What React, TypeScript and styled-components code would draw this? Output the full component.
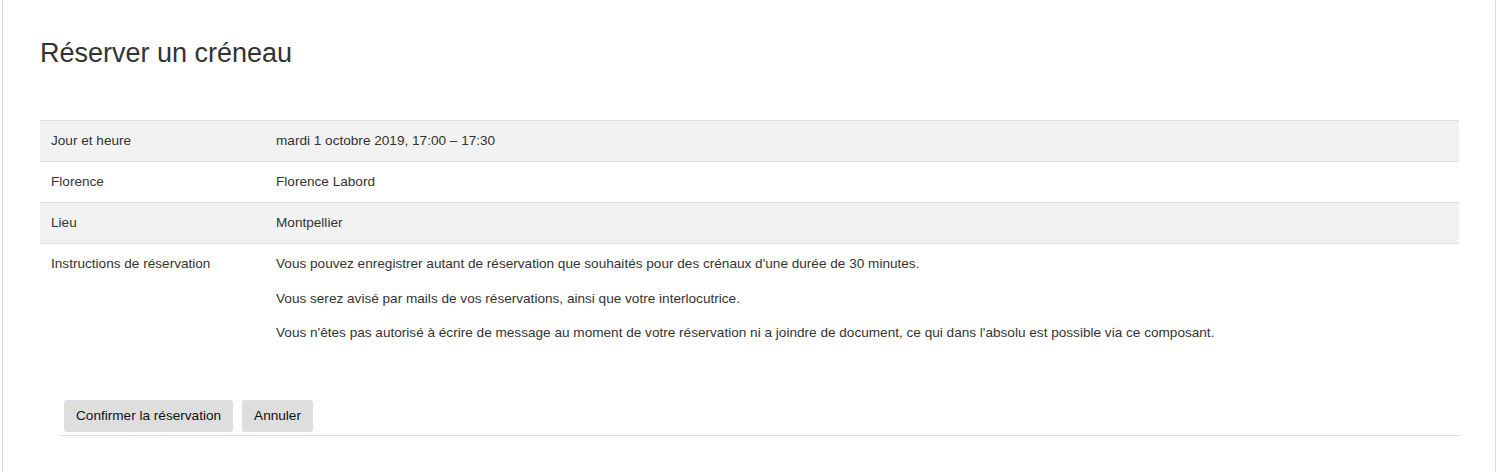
import React from 'react';
import styled, { createGlobalStyle } from 'styled-components';

const GlobalStyle = createGlobalStyle`
  body {
    margin: 0;
    background: #fff;
    font-family: "Liberation Sans", Arial, sans-serif;
    color: #333;
  }
`;

const Card = styled.div`
  margin-left: 2px;
  width: 1494px;
  min-height: 472px;
  box-sizing: border-box;
  border-left: 1px solid #dcdcdc;
  border-right: 1px solid #dcdcdc;
  padding: 37px 36px 0 37px;
`;

const Title = styled.h2`
  margin: 0 0 51px;
  font-size: 27px;
  font-weight: 400;
  line-height: 32px;
  color: #333;
`;

const Table = styled.div`
  display: flex;
  flex-direction: column;
  font-size: 13.6px;
  color: #333;
`;

type RowProps = { $striped?: boolean };

const Row = styled.div<RowProps>`
  display: grid;
  grid-template-columns: 225px 1fr;
  border-top: 1px solid #dedede;
  background: ${(p) => (p.$striped ? '#f2f2f2' : '#fff')};
`;

const Cell = styled.div`
  padding: 10px 11px;
  line-height: 20px;
`;

const Para = styled.p`
  margin: 0 0 14.5px;
  line-height: 20px;
`;

const Actions = styled.div`
  display: flex;
  gap: 9px;
  margin: 32px 0 0 21px;
  padding: 0 0 3px 3px;
  border-bottom: 1px solid #dedede;
`;

const Button = styled.button`
  font-family: "Liberation Sans", Arial, sans-serif;
  font-size: 13.6px;
  color: #111;
  background: #dedede;
  border: none;
  border-radius: 3px;
  height: 32px;
  padding: 0 12px;
  cursor: pointer;
`;

const rows = [
  { label: 'Jour et heure', value: 'mardi 1 octobre 2019, 17:00 – 17:30' },
  { label: 'Florence', value: 'Florence Labord' },
  { label: 'Lieu', value: 'Montpellier' },
];

const instructions = [
  "Vous pouvez enregistrer autant de réservation que souhaités pour des crénaux d'une durée de 30 minutes.",
  'Vous serez avisé par mails de vos réservations, ainsi que votre interlocutrice.',
  "Vous n'êtes pas autorisé à écrire de message au moment de votre réservation ni a joindre de document, ce qui dans l'absolu est possible via ce composant.",
];

const App = (): JSX.Element => {
  return (
    <>
      <GlobalStyle />
      <Card>
        <Title>Réserver un créneau</Title>
        <Table>
          {rows.map((row, i) => (
            <Row key={row.label} $striped={i % 2 === 0}>
              <Cell>{row.label}</Cell>
              <Cell>{row.value}</Cell>
            </Row>
          ))}
          <Row>
            <Cell>Instructions de réservation</Cell>
            <Cell>
              {instructions.map((text) => (
                <Para key={text}>{text}</Para>
              ))}
            </Cell>
          </Row>
        </Table>
        <Actions>
          <Button type="button">Confirmer la réservation</Button>
          <Button type="button">Annuler</Button>
        </Actions>
      </Card>
    </>
  );
};

export default App;
